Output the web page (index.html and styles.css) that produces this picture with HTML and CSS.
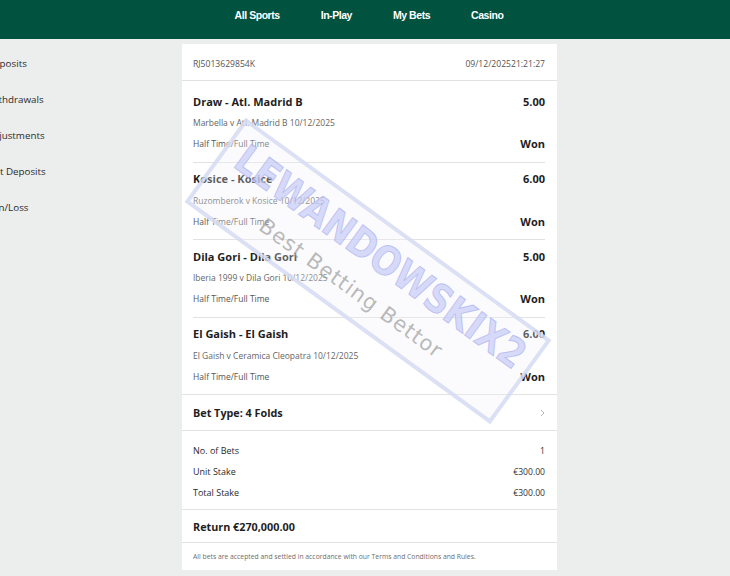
FILE: index.html
```html
<!DOCTYPE html>
<html lang="en">
<head>
<meta charset="utf-8">
<title>Bet Details</title>
<link rel="stylesheet" href="styles.css">
</head>
<body>
<header class="topbar">
  <nav class="nav">
    <a class="nav-item">All Sports</a>
    <a class="nav-item">In-Play</a>
    <a class="nav-item">My Bets</a>
    <a class="nav-item">Casino</a>
  </nav>
</header>
<div class="layout">
  <aside class="sidebar">
    <div class="side-item">Deposits</div>
    <div class="side-item">Withdrawals</div>
    <div class="side-item">Adjustments</div>
    <div class="side-item">Net Deposits</div>
    <div class="side-item">Win/Loss</div>
  </aside>
  <main class="card">
    <div class="card-head">
      <span>RJ5013629854K</span>
      <span>09/12/202521:21:27</span>
    </div>
    <div class="selections">
      <div class="sel">
        <div class="row title"><span>Draw - Atl. Madrid B</span><span class="odds">5.00</span></div>
        <div class="row sub"><span>Marbella v Atl. Madrid B 10/12/2025</span></div>
        <div class="row market"><span>Half Time/Full Time</span><span class="result">Won</span></div>
      </div>
      <div class="sel">
        <div class="row title"><span>Kosice - Kosice</span><span class="odds">6.00</span></div>
        <div class="row sub"><span>Ruzomberok v Kosice 10/12/2025</span></div>
        <div class="row market"><span>Half Time/Full Time</span><span class="result">Won</span></div>
      </div>
      <div class="sel">
        <div class="row title"><span>Dila Gori - Dila Gori</span><span class="odds">5.00</span></div>
        <div class="row sub"><span>Iberia 1999 v Dila Gori 10/12/2025</span></div>
        <div class="row market"><span>Half Time/Full Time</span><span class="result">Won</span></div>
      </div>
      <div class="sel">
        <div class="row title"><span>El Gaish - El Gaish</span><span class="odds">6.00</span></div>
        <div class="row sub"><span>El Gaish v Ceramica Cleopatra 10/12/2025</span></div>
        <div class="row market"><span>Half Time/Full Time</span><span class="result">Won</span></div>
      </div>
    </div>
    <div class="bet-type">
      <span>Bet Type: 4 Folds</span>
      <svg class="chev" width="5" height="8" viewBox="0 0 5 8"><path d="M1 1 L4 4 L1 7" fill="none" stroke="#b5b5b5" stroke-width="1"/></svg>
    </div>
    <div class="stakes">
      <div class="stake-row"><span>No. of Bets</span><span>1</span></div>
      <div class="stake-row"><span>Unit Stake</span><span>€300.00</span></div>
      <div class="stake-row"><span>Total Stake</span><span>€300.00</span></div>
    </div>
    <div class="return">Return €270,000.00</div>
    <div class="foot">All bets are accepted and settled in accordance with our Terms and Conditions and Rules.</div>
  </main>
</div>
<svg class="watermark" width="730" height="576" viewBox="0 0 730 576">
  <g transform="translate(368 271) rotate(36)">
    <rect x="-187" y="-50" width="374" height="100" fill="rgba(242,243,250,0.3)" stroke="rgba(214,218,242,0.85)" stroke-width="4"/>
    <text class="wm-big" x="2" y="-5" text-anchor="middle" textLength="348" lengthAdjust="spacingAndGlyphs">LEWANDOWSKIX2</text>
    <text class="wm-small" x="-4" y="31" text-anchor="middle" textLength="220" lengthAdjust="spacing">Best Betting Bettor</text>
  </g>
</svg>
</body>
</html>
```

FILE: styles.css
```css
* { box-sizing: border-box; }
html, body { margin: 0; padding: 0; }
body {
  background: #eceded;
  font-family: "Open Sans", "Noto Sans", sans-serif;
  color: #1f1f1f;
  width: 730px;
  height: 576px;
  overflow: hidden;
  position: relative;
}
.topbar {
  background: #01533f;
  height: 39px;
}
.nav {
  display: flex;
  justify-content: center;
  gap: 41px;
  padding: 8px 0 0 8px;
}
.nav-item {
  color: #ffffff;
  font-family: "Liberation Sans", Arial, sans-serif;
  font-weight: bold;
  font-size: 10.5px;
  letter-spacing: -0.45px;
  line-height: 14px;
}
.layout {
  display: flex;
  align-items: flex-start;
  padding-top: 5px;
}
.sidebar {
  margin-left: -13px;
  flex: 0 0 195px;
  padding-top: 2px;
}
.side-item {
  font-size: 9.8px;
  line-height: 36px;
  color: #2b2b2b;
  white-space: nowrap;
}
.card {
  width: 375px;
  background: #ffffff;
  display: flex;
  flex-direction: column;
}
.card-head {
  height: 37px;
  padding: 3px 12px 0 11px;
  display: flex;
  justify-content: space-between;
  align-items: center;
  font-size: 8.6px;
  color: #555555;
  border-bottom: 1px solid #e2e2e2;
}
.selections {
  padding-top: 4px;
  border-bottom: 1px solid #e2e2e2;
}
.sel {
  margin: 0 12px 0 11px;
  padding: 6px 0 8.5px;
  border-bottom: 1px solid #e2e2e2;
}
.sel:last-child { border-bottom: none; }
.row {
  display: flex;
  justify-content: space-between;
  align-items: center;
}
.title {
  height: 20px;
  font-size: 11px;
  font-weight: bold;
  color: #1e1e1e;
}
.sub {
  height: 23px;
  font-size: 8.5px;
  color: #666666;
}
.market {
  height: 19px;
  font-size: 8.5px;
  color: #555555;
}
.odds { font-size: 11px; font-weight: bold; }
.result { font-size: 11px; font-weight: bold; color: #1e1e1e; }
.bet-type {
  height: 36px;
  padding: 0 12px 0 11px;
  display: flex;
  justify-content: space-between;
  align-items: center;
  font-size: 10.8px;
  font-weight: bold;
  color: #1e1e1e;
  border-bottom: 1px solid #e2e2e2;
}
.stakes {
  padding: 9px 12px 6px 11px;
  border-bottom: 1px solid #e2e2e2;
}
.stake-row {
  height: 21px;
  display: flex;
  justify-content: space-between;
  align-items: center;
  font-size: 9px;
  color: #2a2a2a;
}
.stake-row span:last-child { font-size: 8.6px; color: #333; }
.return {
  height: 33px;
  padding: 0 11px;
  display: flex;
  align-items: center;
  font-size: 10.8px;
  font-weight: bold;
  color: #1e1e1e;
  border-bottom: 1px solid #e2e2e2;
}
.foot {
  height: 27px;
  padding: 0 11px;
  display: flex;
  align-items: center;
  font-size: 6.8px;
  color: #6e6e6e;
}
.watermark {
  position: absolute;
  left: 0;
  top: 0;
  pointer-events: none;
}
.wm-big {
  font-family: "DejaVu Sans", sans-serif;
  font-weight: bold;
  font-size: 40px;
  fill: rgba(200, 205, 247, 0.72);
  stroke: rgba(160, 167, 236, 0.6);
  stroke-width: 1;
}
.wm-small {
  font-family: "DejaVu Sans", sans-serif;
  font-size: 21px;
  fill: rgba(140, 140, 140, 0.6);
}
```
